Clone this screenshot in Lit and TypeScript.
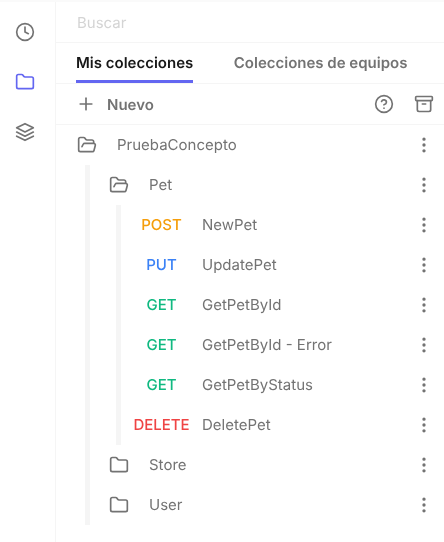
import { LitElement, html, css, svg } from "lit";
import { customElement } from "lit/decorators.js";

const P = {
  clock: svg`<circle cx="12" cy="12" r="10"/><polyline points="12 6 12 12 16 14"/>`,
  folder: svg`<path d="M20 20a2 2 0 0 0 2-2V8a2 2 0 0 0-2-2h-7.9a2 2 0 0 1-1.69-.9L9.6 3.9A2 2 0 0 0 7.93 3H4a2 2 0 0 0-2 2v13a2 2 0 0 0 2 2Z"/>`,
  open: svg`<path d="m6 14 1.45-2.9A2 2 0 0 1 9.24 10H20a2 2 0 0 1 1.94 2.5l-1.55 6a2 2 0 0 1-1.94 1.5H4a2 2 0 0 1-2-2V5c0-1.1.9-2 2-2h3.93a2 2 0 0 1 1.66.9l.82 1.2a2 2 0 0 0 1.66.9H18a2 2 0 0 1 2 2v2"/>`,
  layers: svg`<polygon points="12 2 2 7 12 12 22 7 12 2"/><polyline points="2 17 12 22 22 17"/><polyline points="2 12 12 17 22 12"/>`,
  plus: svg`<line x1="12" y1="5" x2="12" y2="19"/><line x1="5" y1="12" x2="19" y2="12"/>`,
  help: svg`<circle cx="12" cy="12" r="10"/><path d="M9.09 9a3 3 0 0 1 5.83 1c0 2-3 3-3 3"/><line x1="12" y1="17" x2="12.01" y2="17"/>`,
  archive: svg`<rect x="2" y="3" width="20" height="5" rx="1"/><path d="M4 8v11a2 2 0 0 0 2 2h12a2 2 0 0 0 2-2V8"/><path d="M10 12h4"/>`,
  more: svg`<circle cx="12" cy="12" r="1"/><circle cx="12" cy="5" r="1"/><circle cx="12" cy="19" r="1"/>`,
};
const ic = (n: keyof typeof P, cls = "") =>
  html`<svg class="ic ${cls}" viewBox="0 0 24 24" fill="none" stroke="currentColor" stroke-width="2" stroke-linecap="round" stroke-linejoin="round">${P[n]}</svg>`;

const REQS = [
  ["POST", "post", "NewPet"],
  ["PUT", "put", "UpdatePet"],
  ["GET", "get", "GetPetById"],
  ["GET", "get", "GetPetById - Error"],
  ["GET", "get", "GetPetByStatus"],
  ["DELETE", "del", "DeletePet"],
];

@customElement("app-root")
export class AppRoot extends LitElement {
  static styles = css`
    :host { display: flex; width: 444px; height: 542px; background: #fff; overflow: hidden;
      font-family: Inter, sans-serif; font-size: 15px; color: #737373; flex-direction: column;
      text-rendering: geometricPrecision; }
    .strip { height: 2px; background: #fafafa; flex: none; }
    .main { flex: 1; display: flex; min-height: 0; }
    .side { width: 50px; padding-right: 5px; flex: none; border-right: 1px solid #f5f5f5; display: flex; flex-direction: column; align-items: center; padding-top: 20px; gap: 30px; }
    .ic { width: 20px; height: 20px; flex: none; }
    .active { color: #6366f1; }
    .col { flex: 1; min-width: 0; display: flex; flex-direction: column; will-change: opacity; }
    .search { height: 40px; flex: none; display: flex; align-items: center; padding-left: 21px; color: #d4d4d4; border-bottom: 1px solid #f5f5f5; }
    .tabs { height: 40px; flex: none; display: flex; padding-left: 20px; gap: 40.5px; border-bottom: 1px solid #f5f5f5; font-weight: 600; }
    .tab { display: flex; align-items: center; height: 40px; box-sizing: border-box; border-bottom: 3px solid transparent; padding-top: 1px; }
    .tab.on { color: #171717; border-bottom-color: #6366f1; }
    .tools { height: 40px; flex: none; display: flex; align-items: center; padding: 0 10px 0 20px; border-bottom: 1px solid #f5f5f5; font-weight: 600; }
    .tools .plus { margin-right: 11px; }
    .grow { flex: 1; }
    .tools .gap { width: 20px; }
    .tree { display: flex; flex-direction: column; }
    .row { height: 40px; display: flex; align-items: center; flex: none; }
    .row .folder { margin-right: 20px; }
    .name { flex: 1; min-width: 0; padding-bottom: 1px; }
    .more { margin-right: 10px; }
    .root { padding-left: 21px; }
    .sub { margin-left: 29px; border-left: 5px solid #f5f5f5; }
    .sub .row.f { padding-left: 19px; }
    .reqs { margin-left: 26px; border-left: 5px solid #f5f5f5; }
    .reqs .row { padding-left: 11.5px; }
    .method { width: 58px; margin-right: 11.5px; text-align: center; font-weight: 500; flex: none; padding-bottom: 1px; }
    .post { color: #f59e0b; }
    .put { color: #3b82f6; }
    .get { color: #10b981; }
    .del { color: #ef4444; }
  `;

  render() {
    return html`
      <div class="strip"></div>
      <div class="main">
        <nav class="side">
          ${ic("clock")}
          ${ic("folder", "active")}
          ${ic("layers")}
        </nav>
        <div class="col">
          <div class="search">Buscar</div>
          <div class="tabs">
            <div class="tab on">Mis colecciones</div>
            <div class="tab">Colecciones de equipos</div>
          </div>
          <div class="tools">
            ${ic("plus", "plus")}<span>Nuevo</span><span class="grow"></span>
            ${ic("help")}<span class="gap"></span>${ic("archive")}
          </div>
          <div class="tree">
            <div class="row root">${ic("open", "folder")}<span class="name">PruebaConcepto</span>${ic("more", "more")}</div>
            <div class="sub">
              <div class="row f">${ic("open", "folder")}<span class="name">Pet</span>${ic("more", "more")}</div>
              <div class="reqs">
                ${REQS.map(([m, c, n]) => html`<div class="row"><span class="method ${c}">${m}</span><span class="name">${n}</span>${ic("more", "more")}</div>`)}
              </div>
              <div class="row f">${ic("folder", "folder")}<span class="name">Store</span>${ic("more", "more")}</div>
              <div class="row f">${ic("folder", "folder")}<span class="name">User</span>${ic("more", "more")}</div>
            </div>
          </div>
        </div>
      </div>
    `;
  }
}
